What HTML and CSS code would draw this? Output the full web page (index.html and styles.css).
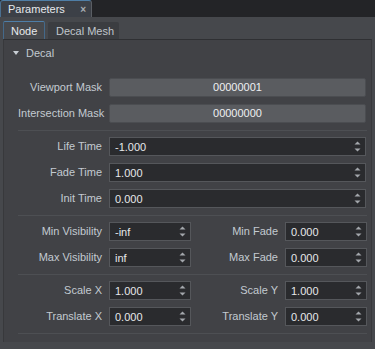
FILE: index.html
```html
<!DOCTYPE html>
<html>
<head>
<meta charset="utf-8">
<link rel="stylesheet" href="styles.css">
</head>
<body>
<div class="topbar">
  <div class="ptab"><span class="ptab-title">Parameters</span><span class="ptab-close">×</span></div>
</div>
<div class="panel">
  <div class="tabs">
    <div class="tab active">Node</div>
    <div class="tab">Decal Mesh</div>
  </div>
  <div class="content">
    <div class="group-head"><span class="tri"></span>Decal</div>
    <div class="section">
      <div class="label">Viewport Mask</div>
      <div class="button full">00000001</div>
      <div class="label">Intersection Mask</div>
      <div class="button full">00000000</div>
    </div>
    <div class="sep"></div>
    <div class="section">
      <div class="label">Life Time</div>
      <div class="field full"><span>-1.000</span><svg class="spin" width="7" height="13" viewBox="0 0 7 13"><path d="M3.5 1.5 L6.5 4.5 H0.5 Z" /><path d="M0.5 8.5 H6.5 L3.5 11.5 Z"/></svg></div>
      <div class="label">Fade Time</div>
      <div class="field full"><span>1.000</span><svg class="spin" width="7" height="13" viewBox="0 0 7 13"><path d="M3.5 1.5 L6.5 4.5 H0.5 Z" /><path d="M0.5 8.5 H6.5 L3.5 11.5 Z"/></svg></div>
      <div class="label">Init Time</div>
      <div class="field full"><span>0.000</span><svg class="spin" width="7" height="13" viewBox="0 0 7 13"><path d="M3.5 1.5 L6.5 4.5 H0.5 Z" /><path d="M0.5 8.5 H6.5 L3.5 11.5 Z"/></svg></div>
    </div>
    <div class="sep"></div>
    <div class="section">
      <div class="label">Min Visibility</div>
      <div class="field"><span>-inf</span><svg class="spin" width="7" height="13" viewBox="0 0 7 13"><path d="M3.5 1.5 L6.5 4.5 H0.5 Z" /><path d="M0.5 8.5 H6.5 L3.5 11.5 Z"/></svg></div>
      <div class="label">Min Fade</div>
      <div class="field"><span>0.000</span><svg class="spin" width="7" height="13" viewBox="0 0 7 13"><path d="M3.5 1.5 L6.5 4.5 H0.5 Z" /><path d="M0.5 8.5 H6.5 L3.5 11.5 Z"/></svg></div>
      <div class="label">Max Visibility</div>
      <div class="field"><span>inf</span><svg class="spin" width="7" height="13" viewBox="0 0 7 13"><path d="M3.5 1.5 L6.5 4.5 H0.5 Z" /><path d="M0.5 8.5 H6.5 L3.5 11.5 Z"/></svg></div>
      <div class="label">Max Fade</div>
      <div class="field"><span>0.000</span><svg class="spin" width="7" height="13" viewBox="0 0 7 13"><path d="M3.5 1.5 L6.5 4.5 H0.5 Z" /><path d="M0.5 8.5 H6.5 L3.5 11.5 Z"/></svg></div>
    </div>
    <div class="sep"></div>
    <div class="section">
      <div class="label">Scale X</div>
      <div class="field"><span>1.000</span><svg class="spin" width="7" height="13" viewBox="0 0 7 13"><path d="M3.5 1.5 L6.5 4.5 H0.5 Z" /><path d="M0.5 8.5 H6.5 L3.5 11.5 Z"/></svg></div>
      <div class="label">Scale Y</div>
      <div class="field"><span>1.000</span><svg class="spin" width="7" height="13" viewBox="0 0 7 13"><path d="M3.5 1.5 L6.5 4.5 H0.5 Z" /><path d="M0.5 8.5 H6.5 L3.5 11.5 Z"/></svg></div>
      <div class="label">Translate X</div>
      <div class="field"><span>0.000</span><svg class="spin" width="7" height="13" viewBox="0 0 7 13"><path d="M3.5 1.5 L6.5 4.5 H0.5 Z" /><path d="M0.5 8.5 H6.5 L3.5 11.5 Z"/></svg></div>
      <div class="label">Translate Y</div>
      <div class="field"><span>0.000</span><svg class="spin" width="7" height="13" viewBox="0 0 7 13"><path d="M3.5 1.5 L6.5 4.5 H0.5 Z" /><path d="M0.5 8.5 H6.5 L3.5 11.5 Z"/></svg></div>
    </div>
    <div class="sep last"></div>
  </div>
</div>
</body>
</html>
```
FILE: styles.css
```css
* { box-sizing: border-box; }
html, body {
  margin: 0;
  padding: 0;
  height: 100%;
}
body {
  background: #46484c;
  font-family: "Liberation Sans", Arial, sans-serif;
  font-size: 11px;
  color: #c3cad1;
  overflow: hidden;
}
.topbar {
  height: 17px;
  background: #232427;
  display: flex;
}
.ptab {
  width: 92px;
  height: 17px;
  background: #3c4047;
  border-top: 1px solid #4f7ea6;
  border-left: 1px solid #4a6f90;
  border-right: 1px solid #5a5e64;
  border-radius: 3px 3px 0 0;
  display: flex;
  align-items: center;
  justify-content: space-between;
  padding: 0 5px 0 7px;
  color: #e6e9ec;
  font-size: 11px;
}
.ptab-close {
  color: #a9adb2;
  font-size: 10px;
  font-weight: bold;
}
.panel {
  padding: 4px 0 0 3px;
}
.tabs {
  display: flex;
  gap: 3px;
  height: 18px;
  align-items: flex-end;
}
.tab {
  height: 17px;
  background: #3b3d41;
  color: #c0c6cc;
  padding: 0 0 0 8px;
  display: flex;
  align-items: center;
  border-radius: 2px 2px 0 0;
  white-space: nowrap;
  width: 71px;
}
.tab.active {
  height: 18px;
  width: 42px;
  background: #47494d;
  border-top: 1px solid #4e7ea8;
  border-left: 1px solid #44698a;
  border-right: 1px solid #44698a;
  color: #e8eaec;
  padding-left: 7px;
}
.content {
  margin-right: 3px;
  background: #414246;
  border-top: 1px solid #2f3033;
  border-left: 1px solid #38393c;
  border-right: 1px solid #38393c;
  padding: 0 4px 8px 14px;
}
.group-head {
  height: 26px;
  display: flex;
  align-items: center;
  margin-left: -5px;
  color: #c3cad1;
}
.tri {
  width: 0;
  height: 0;
  border-left: 3.5px solid transparent;
  border-right: 3.5px solid transparent;
  border-top: 4px solid #c8ced4;
  margin-right: 7px;
}
.section {
  display: grid;
  grid-template-columns: 84px 82px 80px 82px;
  column-gap: 7px;
  row-gap: 7px;
  padding-top: 12px;
}
.sep + .section { padding-top: 6px; }
.sep {
  height: 1px;
  background: #4d4f53;
  margin-top: 7px;
}
.label {
  text-align: right;
  height: 19px;
  line-height: 19px;
  white-space: nowrap;
}
.full { grid-column: 2 / 5; margin-right: 1px; }
.button {
  height: 19px;
  background: #5a5c60;
  border: 1px solid #4b4d51;
  border-radius: 2px;
  text-align: center;
  line-height: 17px;
  color: #eef0f2;
}
.field {
  height: 19px;
  background: #2a2b2e;
  border: 1px solid #55575b;
  display: flex;
  align-items: center;
  justify-content: space-between;
  padding: 0 4px 0 5px;
  color: #e6e8ea;
}
.spin { fill: #a3a7ac; flex: none; }
```
